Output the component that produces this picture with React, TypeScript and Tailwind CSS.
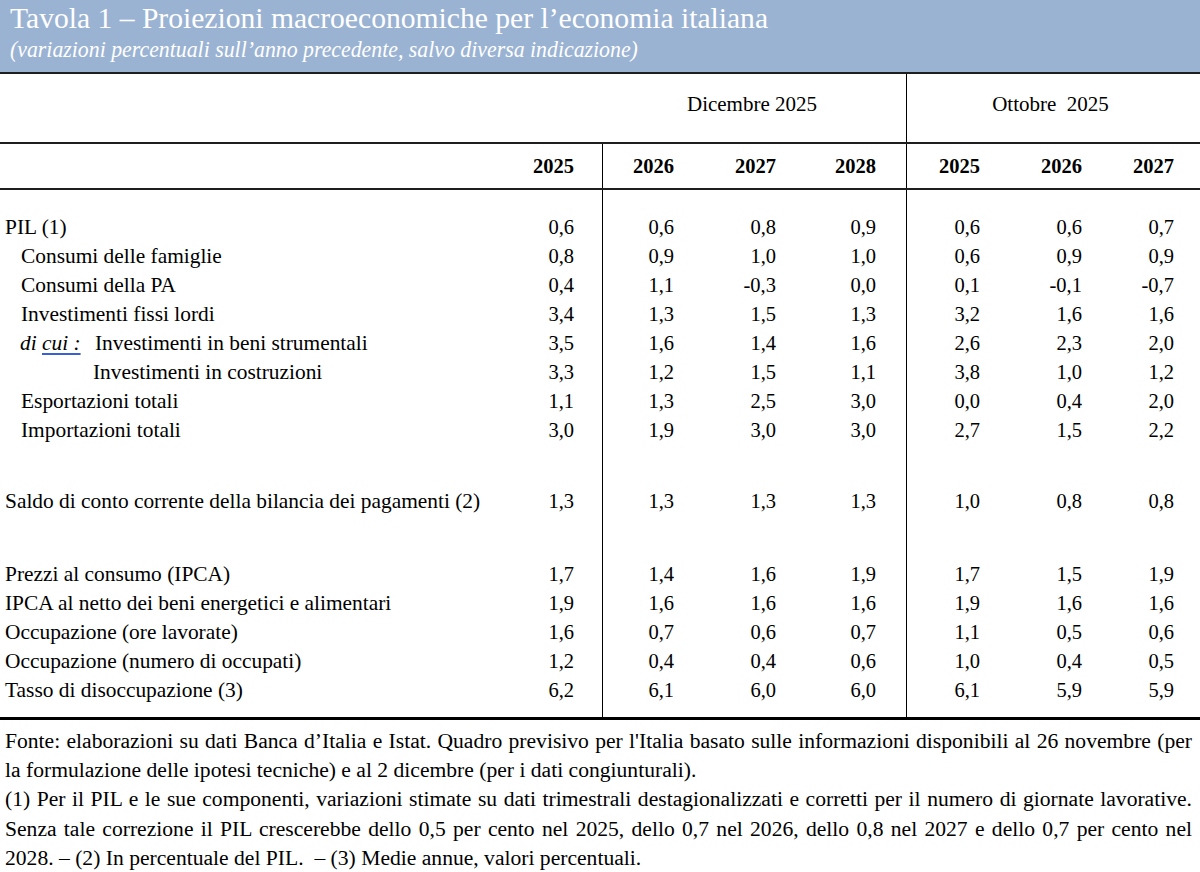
import React from "react";

const serif = { fontFamily: '"Liberation Serif", "Times New Roman", serif' };

const PAD = ["pr-[28px]", "pr-[29px]", "pr-[28px]", "pr-[30px]", "pr-[26px]", "pr-[26px]", "pr-[26px]"];
const GRID = "grid grid-cols-[500px_102px_101px_101px_102px_100px_102px_92px]";

function Cells({ values, bold }: { values: string[]; bold?: boolean }) {
  return (
    <>
      {values.map((v, i) => (
        <div
          key={i}
          className={
            "flex items-center justify-end text-[20.5px] " +
            PAD[i] +
            (i === 1 || i === 4 ? " border-l border-black" : "") +
            (bold ? " font-bold" : "")
          }
        >
          {v}
        </div>
      ))}
    </>
  );
}

function Row({ label, values, h = "h-[29px]" }: { label?: React.ReactNode; values: string[]; h?: string }) {
  return (
    <div className={GRID + " " + h}>
      <div className="flex items-center pl-[5px] whitespace-pre text-[21.4px]">{label}</div>
      <Cells values={values} />
    </div>
  );
}

const empty = ["", "", "", "", "", "", ""];

const group1: [React.ReactNode, string[]][] = [
  ["PIL (1)", ["0,6", "0,6", "0,8", "0,9", "0,6", "0,6", "0,7"]],
  [<span className="pl-[16px]">Consumi delle famiglie</span>, ["0,8", "0,9", "1,0", "1,0", "0,6", "0,9", "0,9"]],
  [<span className="pl-[16px]">Consumi della PA</span>, ["0,4", "1,1", "-0,3", "0,0", "0,1", "-0,1", "-0,7"]],
  [<span className="pl-[16px]">Investimenti fissi lordi</span>, ["3,4", "1,3", "1,5", "1,3", "3,2", "1,6", "1,6"]],
  [
    <span className="flex">
      <span className="pl-[15px] w-[90px] shrink-0 italic">
        di{" "}
        <span className="underline decoration-[#3b5fd6] decoration-[1.5px] underline-offset-[3px]">cui :</span>
      </span>
      <span>Investimenti in beni strumentali</span>
    </span>,
    ["3,5", "1,6", "1,4", "1,6", "2,6", "2,3", "2,0"],
  ],
  [<span className="pl-[88px]">Investimenti in costruzioni</span>, ["3,3", "1,2", "1,5", "1,1", "3,8", "1,0", "1,2"]],
  [<span className="pl-[16px]">Esportazioni totali</span>, ["1,1", "1,3", "2,5", "3,0", "0,0", "0,4", "2,0"]],
  [<span className="pl-[16px]">Importazioni totali</span>, ["3,0", "1,9", "3,0", "3,0", "2,7", "1,5", "2,2"]],
];

const group3: [string, string[]][] = [
  ["Prezzi al consumo (IPCA)", ["1,7", "1,4", "1,6", "1,9", "1,7", "1,5", "1,9"]],
  ["IPCA al netto dei beni energetici e alimentari", ["1,9", "1,6", "1,6", "1,6", "1,9", "1,6", "1,6"]],
  ["Occupazione (ore lavorate)", ["1,6", "0,7", "0,6", "0,7", "1,1", "0,5", "0,6"]],
  ["Occupazione (numero di occupati)", ["1,2", "0,4", "0,4", "0,6", "1,0", "0,4", "0,5"]],
  ["Tasso di disoccupazione (3)", ["6,2", "6,1", "6,0", "6,0", "6,1", "5,9", "5,9"]],
];

export default function App() {
  return (
    <div className="w-[1200px] h-[872px] bg-white text-black overflow-hidden leading-none" style={serif}>
      {/* Title band */}
      <div className="h-[74px] bg-[#9bb3d3] text-white pl-[10px] pt-[2px] border-b-2 border-[#1e1e1e]">
        <div className="text-[29.6px] leading-[32px] whitespace-nowrap">
          Tavola 1 – Proiezioni macroeconomiche per l’economia italiana
        </div>
        <div className="text-[24px] leading-[30px] italic whitespace-nowrap inline-block scale-x-[0.909] origin-left">
          (variazioni percentuali sull’anno precedente, salvo diversa indicazione)
        </div>
      </div>

      {/* Group header */}
      <div className="grid grid-cols-[602px_304px_294px] h-[70px] border-b-2 border-[#1e1e1e] text-[21px]">
        <div />
        <div className="flex items-center justify-center pr-[4px] pb-[8px]">Dicembre 2025</div>
        <div className="flex items-center justify-center border-l border-black whitespace-pre pr-[6px] pb-[8px]">
          Ottobre  2025
        </div>
      </div>

      {/* Year header */}
      <div className={GRID + " h-[46px] border-b-2 border-[#1e1e1e]"}>
        <div />
        <Cells values={["2025", "2026", "2027", "2028", "2025", "2026", "2027"]} bold />
      </div>

      <Row values={empty} h="h-[23px]" />
      {group1.map(([l, v], i) => (
        <Row key={i} label={l} values={v} />
      ))}
      <Row values={empty} h="h-[42px]" />
      <Row
        label="Saldo di conto corrente della bilancia dei pagamenti (2)"
        values={["1,3", "1,3", "1,3", "1,3", "1,0", "0,8", "0,8"]}
      />
      <Row values={empty} h="h-[44px]" />
      {group3.map(([l, v], i) => (
        <Row key={i} label={l} values={v} />
      ))}
      <Row values={empty} h="h-[12px]" />
      <div className="h-[3px] bg-black" />

      {/* Footnotes */}
      <div className="pl-[5px] pr-[8px] pt-[7px] text-[21.6px] leading-[29.2px]">
        <div className="text-justify [text-align-last:justify] whitespace-nowrap">
          Fonte: elaborazioni su dati Banca d’Italia e Istat. Quadro previsivo per l'Italia basato sulle informazioni disponibili al 26 novembre (per
        </div>
        <div className="whitespace-nowrap">
          la formulazione delle ipotesi tecniche) e al 2 dicembre (per i dati congiunturali).
        </div>
        <div className="text-justify [text-align-last:justify] whitespace-nowrap">
          (1) Per il PIL e le sue componenti, variazioni stimate su dati trimestrali destagionalizzati e corretti per il numero di giornate lavorative.
        </div>
        <div className="text-justify [text-align-last:justify] whitespace-nowrap">
          Senza tale correzione il PIL crescerebbe dello 0,5 per cento nel 2025, dello 0,7 nel 2026, dello 0,8 nel 2027 e dello 0,7 per cento nel
        </div>
        <div className="whitespace-pre">2028. – (2) In percentuale del PIL.  – (3) Medie annue, valori percentuali.</div>
      </div>
    </div>
  );
}
